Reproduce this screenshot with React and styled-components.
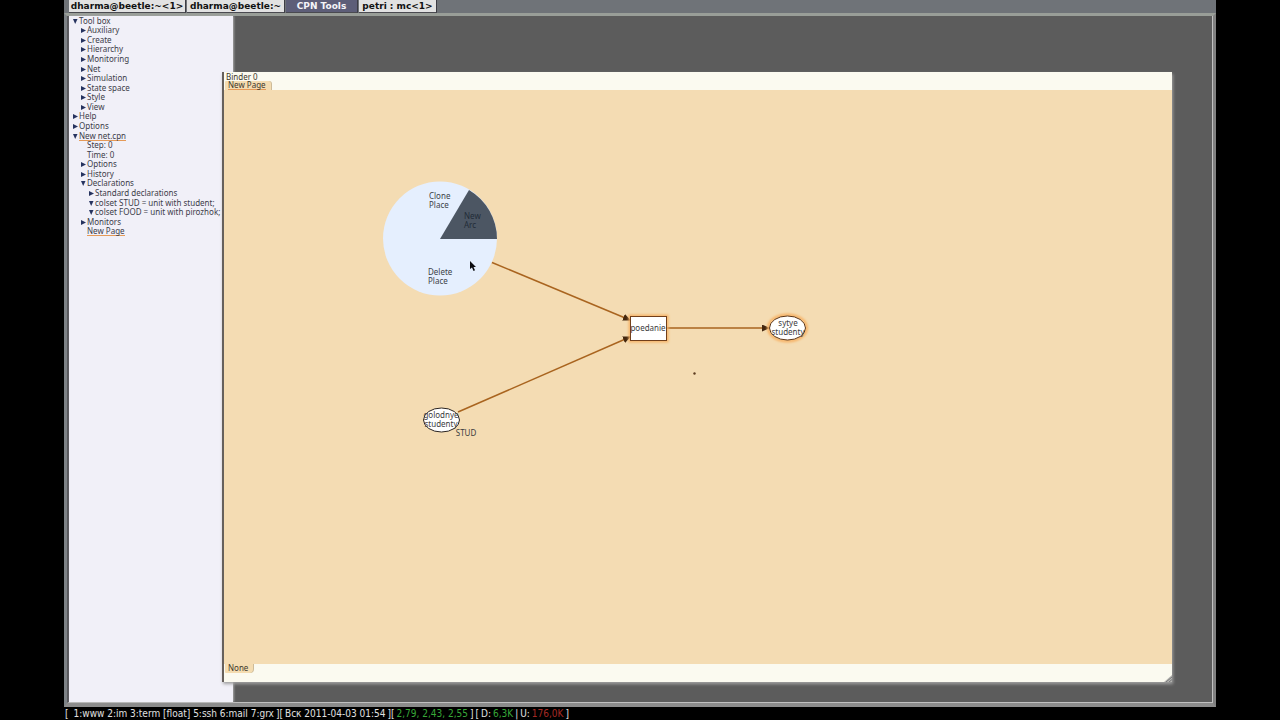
import React from "react";
import styled, { createGlobalStyle, css } from "styled-components";

const GlobalStyle = createGlobalStyle`
  * {
    box-sizing: border-box;
  }
  body {
    margin: 0;
    background: #000;
    font-family: "Noto Sans", "DejaVu Sans", sans-serif;
  }
  button {
    font: inherit;
    color: inherit;
    border: 0;
    padding: 0;
    background: none;
    text-align: left;
    white-space: nowrap;
  }
  ul {
    list-style: none;
    margin: 0;
    padding: 0;
  }
`;

const Screen = styled.div`
  display: flex;
  flex-direction: column;
  height: 100vh;
  padding: 0 5%;
  overflow: hidden;
`;

const WindowTabs = styled.nav`
  display: flex;
  height: 13px;
  padding-left: 5px;
  gap: 1px;
  background: #6f7378;
`;

const WindowTab = styled.button`
  && {
    width: ${(props) => props.$width}px;
    text-align: center;
    font: bold 9px/13px "DejaVu Sans", sans-serif;
    color: ${(props) => (props.$active ? "#f4f4f8" : "#111")};
    background: ${(props) => (props.$active ? "#5d5e78" : "#e2e2e2")};
    border-right: 1px solid #3c3c44;
    border-bottom: 1px solid #4a4a50;
  }
`;

const Frame = styled.div`
  flex: 1;
  min-height: 0;
  display: flex;
  border: 3px solid #7d8286;
  border-top-color: #999e98;
  border-right-color: #808080;
  border-bottom: 4px solid #8c8c8c;
`;

const Desktop = styled.main`
  position: relative;
  flex: 1;
  display: flex;
  background: #5c5c5c;
  border: 1px solid #c0c0c0;
  border-top: 0;
  border-left: 2px solid #58585c;
`;

const Sidebar = styled.aside`
  width: 164px;
  background: #f1f0f8;
  box-shadow: 1px 0 2px #a8a8a8;
`;

const Tree = styled.ul`
  display: grid;
  grid-auto-rows: 1fr;
  height: 220px;
  font-size: 8px;
  color: #3c3c48;
`;

const TreeRow = styled.li`
  display: flex;
  align-items: center;
  min-height: 0;
  height: 100%;
  padding-left: ${(props) => 3 + props.$level * 8}px;
`;

const TreeButton = styled.button`
  display: flex;
  align-items: center;
  gap: 1px;
  line-height: 8px;
`;

const Arrow = styled.svg`
  width: 6px;
  height: 6px;
  fill: #26335f;
`;

const underline = css`
  box-shadow: 0 1px #e59a58;
`;

const TreeLabel = styled.span`
  ${(props) => props.$marked && underline}
`;

const Binder = styled.section`
  position: absolute;
  top: 56px;
  right: 40px;
  bottom: 20px;
  left: 153px;
  display: flex;
  flex-direction: column;
  background: #fbfaf0;
  border-left: 2px solid #66605c;
  box-shadow: 1px 2px 3px #a0a0a0;
  font-size: 8px;
  color: #40382c;
`;

const BinderTitle = styled.header`
  height: 9px;
  padding-left: 2px;
  line-height: 9px;
`;

const PageTabs = styled.div`
  display: flex;
  height: ${(props) => (props.$bottom ? 18 : 9)}px;
  padding-left: 1px;
`;

const PageTab = styled.button`
  display: flex;
  height: 9px;
  padding: 0 5px 0 3px;
  line-height: 8px;
  background: #f4dcb1;
  border-radius: ${(props) => (props.$bottom ? "0 0 4px 1px" : "1px 3px 0 0")};
  box-shadow: 1px 0 #cdbb98;
`;

const PageName = styled.span`
  height: 8px;
  ${(props) => props.$marked && underline}
`;

const Canvas = styled.div`
  position: relative;
  flex: 1;
  min-height: 0;
  overflow: hidden;
  background: #f4dcb3;
`;

const Drawing = styled.svg`
  display: block;
  width: 100%;
  height: 100%;
  font-size: 8px;
`;

const PieItem = styled.button`
  position: absolute;
  left: ${(props) => props.$x}px;
  top: ${(props) => props.$y}px;
  line-height: 9px;
  color: ${(props) => (props.$dark ? "#222c38" : "#3c4248")};
`;

const ResizeGrip = styled.svg`
  position: absolute;
  right: 0;
  bottom: 0;
  width: 8px;
  height: 8px;
`;

const StatusBar = styled.footer`
  display: flex;
  gap: 2px;
  height: 13px;
  padding-left: 1px;
  font: 10px/13px "DejaVu Sans Condensed", "DejaVu Sans", sans-serif;
  color: #e0e0e0;
  white-space: nowrap;
`;

const Load = styled.span`
  color: #38a838;
`;

const Upload = styled.span`
  color: #a52a24;
`;

const Workspaces = styled.span`
  padding-left: 3px;
`;

const windows = [
  { title: "dharma@beetle:~<1>", width: 117 },
  { title: "dharma@beetle:~", width: 98 },
  { title: "CPN Tools", width: 72, active: true },
  { title: "petri : mc<1>", width: 78 },
];

const tree = [
  { label: "Tool box", level: 0, state: "open" },
  { label: "Auxiliary", level: 1, state: "closed" },
  { label: "Create", level: 1, state: "closed" },
  { label: "Hierarchy", level: 1, state: "closed" },
  { label: "Monitoring", level: 1, state: "closed" },
  { label: "Net", level: 1, state: "closed" },
  { label: "Simulation", level: 1, state: "closed" },
  { label: "State space", level: 1, state: "closed" },
  { label: "Style", level: 1, state: "closed" },
  { label: "View", level: 1, state: "closed" },
  { label: "Help", level: 0, state: "closed" },
  { label: "Options", level: 0, state: "closed" },
  { label: "New net.cpn", level: 0, state: "open", marked: true },
  { label: "Step: 0", level: 1 },
  { label: "Time: 0", level: 1 },
  { label: "Options", level: 1, state: "closed" },
  { label: "History", level: 1, state: "closed" },
  { label: "Declarations", level: 1, state: "open" },
  { label: "Standard declarations", level: 2, state: "closed" },
  { label: "colset STUD = unit with student;", level: 2, state: "open" },
  { label: "colset FOOD = unit with pirozhok;", level: 2, state: "open" },
  { label: "Monitors", level: 1, state: "closed" },
  { label: "New Page", level: 1, marked: true },
];

const arrowPaths = {
  open: "M1 1H5.5L3.200 6Z",
  closed: "M1 1L6 3.500L1 6Z",
};

const TreeItem = ({ label, level, state, marked }) => (
  <TreeRow $level={level}>
    <TreeButton type="button" aria-expanded={state && state === "open"}>
      <Arrow aria-hidden="true">{state && <path d={arrowPaths[state]} />}</Arrow>
      <TreeLabel $marked={marked}>{label}</TreeLabel>
    </TreeButton>
  </TreeRow>
);

const Net = () => (
  <Drawing role="img" aria-label="Petri net">
    <defs>
      <marker
        id="head"
        markerUnits="userSpaceOnUse"
        markerWidth="8"
        markerHeight="8"
        refX="7"
        refY="3.5"
        orient="auto"
      >
        <path d="M0 0L8 3.5L0 7Z" fill="#43270f" />
      </marker>
      <filter id="glow" x="-30%" y="-30%" width="160%" height="160%">
        <feGaussianBlur stdDeviation="1.2" />
      </filter>
    </defs>
    <circle cx="216" cy="148.5" r="57" fill="#e5effe" />
    <path d="M216 149L245 100A57 57 0 0 1 273 149Z" fill="#4c5663" />
    <g stroke="#a9641f" strokeWidth="1.5" fill="none">
      <path d="M268 172.500L406 230" markerEnd="url(#head)" />
      <path d="M234 322L406 247" markerEnd="url(#head)" />
      <path d="M443 238H545" markerEnd="url(#head)" />
    </g>
    <g fill="none" stroke="#f7b468" strokeWidth="3" filter="url(#glow)">
      <rect x="406" y="226" width="37" height="25" />
      <ellipse cx="563.5" cy="238" rx="19" ry="13" />
    </g>
    <rect x="406.5" y="226.5" width="36" height="24" fill="#fff" stroke="#713f1a" />
    <ellipse cx="563.5" cy="238" rx="18" ry="12" fill="#fff" stroke="#5a3517" />
    <ellipse cx="217.5" cy="330" rx="18" ry="12" fill="#fff" stroke="#2a2420" />
    <g fill="#3c3c40" textAnchor="middle">
      <text x="424" y="241">poedanie</text>
      <text x="564" y="236">sytye</text>
      <text x="564" y="245">studenty</text>
      <text x="217" y="328">golodnye</text>
      <text x="217" y="337">studenty</text>
      <text x="242" y="346">STUD</text>
    </g>
    <circle cx="470.5" cy="283.5" r="1.200" fill="#5c3c20" />
    <path d="M246 171V179L248 177.500L249.500 181L251 180.300L249.500 177H252Z" fill="#0c0c10" />
  </Drawing>
);

const App = () => (
  <>
    <GlobalStyle />
    <Screen>
      <WindowTabs>
        {windows.map((w) => (
          <WindowTab key={w.title} type="button" $width={w.width} $active={w.active}>
            {w.title}
          </WindowTab>
        ))}
      </WindowTabs>
      <Frame>
        <Desktop>
          <Sidebar>
            <Tree>
              {tree.map((item, index) => (
                <TreeItem key={index} {...item} />
              ))}
            </Tree>
          </Sidebar>
          <Binder>
            <BinderTitle>Binder 0</BinderTitle>
            <PageTabs>
              <PageTab type="button">
                <PageName $marked>New Page</PageName>
              </PageTab>
            </PageTabs>
            <Canvas>
              <Net />
              <PieItem type="button" $x={205} $y={101}>
                Clone
                <br />
                Place
              </PieItem>
              <PieItem type="button" $x={240} $y={121} $dark>
                New
                <br />
                Arc
              </PieItem>
              <PieItem type="button" $x={204} $y={177}>
                Delete
                <br />
                Place
              </PieItem>
            </Canvas>
            <PageTabs $bottom>
              <PageTab type="button" $bottom>
                <PageName>None</PageName>
              </PageTab>
            </PageTabs>
            <ResizeGrip aria-hidden="true">
              <path d="M0 8L8 1V8Z" fill="#b4b4b0" />
              <path d="M2 8L8 3M5 8L8 5.500" stroke="#77777a" />
            </ResizeGrip>
          </Binder>
        </Desktop>
      </Frame>
      <StatusBar>
        <span>[</span>
        <Workspaces>1:www 2:im 3:term [float] 5:ssh 6:mail 7:grx</Workspaces>
        <span>][</span>
        <span>Вск 2011-04-03 01:54</span>
        <span>][</span>
        <Load>2,79, 2,43, 2,55</Load>
        <span>]</span>
        <span>[</span>
        <span>D:</span>
        <Load>6,3K</Load>
        <span>|</span>
        <span>U:</span>
        <Upload>176,0K</Upload>
        <span>]</span>
      </StatusBar>
    </Screen>
  </>
);

export default App;
